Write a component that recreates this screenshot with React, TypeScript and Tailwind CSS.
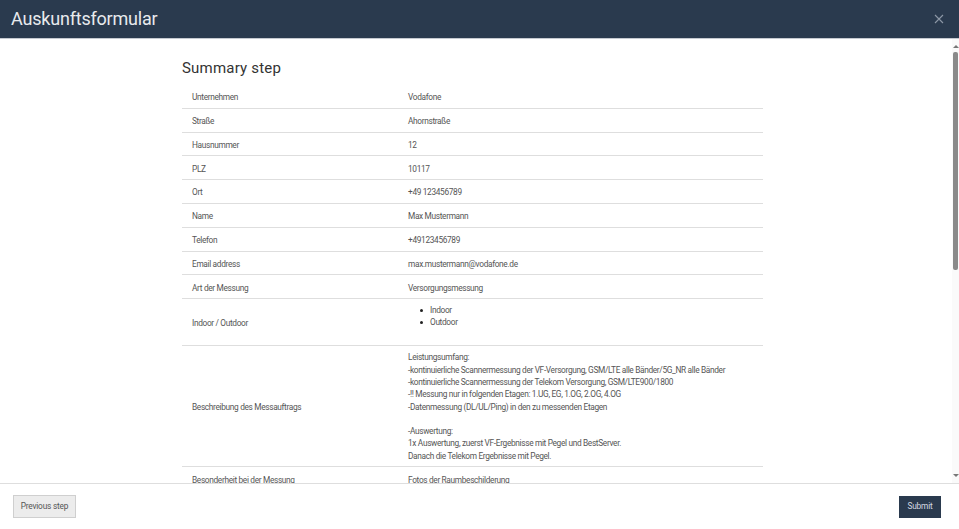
const rows: [string, string][] = [
  ["Unternehmen", "Vodafone"],
  ["Straße", "Ahornstraße"],
  ["Hausnummer", "12"],
  ["PLZ", "10117"],
  ["Ort", "+49 123456789"],
  ["Name", "Max Mustermann"],
  ["Telefon", "+49123456789"],
  ["Email address", "max.mustermann@vodafone.de"],
  ["Art der Messung", "Versorgungsmessung"],
];

const description = [
  "Leistungsumfang:",
  "-kontinuierliche Scannermessung der VF-Versorgung, GSM/LTE alle Bänder/5G_NR alle Bänder",
  "-kontinuierliche Scannermessung der Telekom Versorgung, GSM/LTE900/1800",
  "-!! Messung nur in folgenden Etagen: 1.UG, EG, 1.OG, 2.OG, 4.OG",
  "-Datenmessung (DL/UL/Ping) in den zu messenden Etagen",
  "",
  "-Auswertung:",
  "1x Auswertung, zuerst VF-Ergebnisse mit Pegel und BestServer.",
  "Danach die Telekom Ergebnisse mit Pegel.",
];

function Row({ label, children, className }: { label: string; children: React.ReactNode; className: string }) {
  return (
    <div className={`flex items-center border-b border-[#dedede] pl-2.5 ${className}`}>
      <div className="w-[216px] shrink-0">{label}</div>
      <div>{children}</div>
    </div>
  );
}

export default function App() {
  return (
    <div className="flex h-[529px] w-[959px] flex-col overflow-hidden bg-white font-['Roboto',sans-serif] text-[#333]">
      <header className="flex h-[39px] shrink-0 items-center justify-between border-b border-[#c5c9d0] bg-[#2a3a4e] pl-[11px] pr-[15px]">
        <h1 className="text-[18px] leading-none tracking-[-0.2px] text-[#e8eaed]">Auskunftsformular</h1>
        <svg width="10" height="10" viewBox="0 0 10 10" className="stroke-[#8d98a6]" strokeWidth="1.1">
          <path d="M1 1l8 8M9 1l-8 8" />
        </svg>
      </header>

      <div className="flex min-h-0 flex-1">
        <main className="min-w-0 flex-1 overflow-hidden pl-[182px] pr-[189px] pt-[19px]">
          <h2 className="mb-[7px] text-[15px] leading-[20px] tracking-[0.2px] text-[#333]">Summary step</h2>
          <div className="text-[8.3px] leading-[12.3px] tracking-[-0.33px] text-[#555]">
            {rows.map(([label, value]) => (
              <Row key={label} label={label} className="h-[23.8px] pt-[2px]">
                {value}
              </Row>
            ))}
            <Row label="Indoor / Outdoor" className="h-[47px] pt-[1px]">
              <ul className="-mt-[13px] pl-[12px]">
                {["Indoor", "Outdoor"].map((item) => (
                  <li key={item} className="flex items-center gap-[7px]">
                    <span className="size-[3px] rounded-full bg-[#222]" />
                    {item}
                  </li>
                ))}
              </ul>
            </Row>
            <Row label="Beschreibung des Messauftrags" className="h-[121px] pt-[1px]">
              {description.map((line, i) => (
                <div key={i} className="min-h-[12.3px]">
                  {line}
                </div>
              ))}
            </Row>
            <Row label="Besonderheit bei der Messung" className="h-[24px] pt-[2px]">
              Fotos der Raumbeschilderung
            </Row>
          </div>
        </main>

        <div className="flex w-[7px] shrink-0 flex-col items-center bg-[#fafafa] pt-[6px]">
          <div className="h-0 w-0 border-x-[3px] border-b-[3px] border-x-transparent border-b-[#777]" />
          <div className="mt-[4px] h-[218px] w-[5px] rounded-[2px] bg-[#8a8a8a]" />
          <div className="mt-auto mb-[6px] h-0 w-0 border-x-[3px] border-t-[3px] border-x-transparent border-t-[#777]" />
        </div>
      </div>

      <footer className="flex h-[46px] shrink-0 items-center justify-between border-t border-[#dedede] pl-[13px] pr-[18px] text-[8.3px] tracking-[-0.2px]">
        <button className="h-[23px] w-[63px] border border-[#cfcfcf] bg-[#ececec] text-[#555]">Previous step</button>
        <button className="h-[22px] w-[42px] bg-[#2a3a4e] text-[#d5dbe3]">Submit</button>
      </footer>
    </div>
  );
}
